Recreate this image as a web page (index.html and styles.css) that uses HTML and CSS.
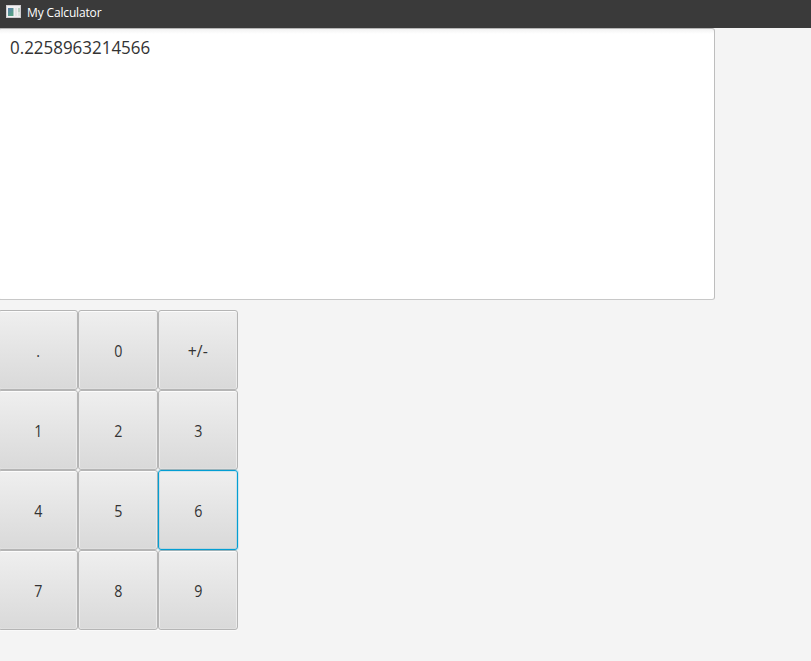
FILE: index.html
```html
<!DOCTYPE html>
<html lang="en">
<head>
<meta charset="utf-8">
<title>My Calculator</title>
<link rel="stylesheet" href="styles.css">
</head>
<body>
<header class="titlebar">
  <svg class="app-icon" width="15" height="13" viewBox="0 0 15 13">
    <defs><linearGradient id="screen" x1="0" y1="0" x2="0.6" y2="1"><stop offset="0" stop-color="#5b7fae"/><stop offset="1" stop-color="#55a184"/></linearGradient></defs>
    <rect width="15" height="13" fill="#d0ced1"/>
    <rect x="1" y="1" width="13" height="11" fill="#f0f0f1"/>
    <rect x="2" y="3" width="5" height="8" fill="url(#screen)"/>
    <rect x="7" y="3" width="1" height="8" fill="#a9c6c0"/>
    <rect x="9" y="3" width="2" height="8" fill="#e2e3e4"/>
    <rect x="12" y="3" width="2" height="4" fill="#b9d1c2"/>
    <rect x="12" y="7" width="2" height="4" fill="#dbe4de"/>
  </svg>
  <span class="title">My Calculator</span>
</header>
<main>
  <div class="display"><span class="value">0.2258963214566</span></div>
  <div class="keypad">
    <button><span>.</span></button><button><span>0</span></button><button class="sign"><span>+/-</span></button>
    <button><span>1</span></button><button><span>2</span></button><button><span>3</span></button>
    <button><span>4</span></button><button><span>5</span></button><button class="focused"><span>6</span></button>
    <button><span>7</span></button><button><span>8</span></button><button><span>9</span></button>
  </div>
</main>
</body>
</html>
```
FILE: styles.css
```css
* { box-sizing: border-box; }

body {
  margin: 0;
  height: 661px;
  overflow: hidden;
  background: #f4f4f4;
  color: #333;
  font-family: "Open Sans", "Noto Sans", sans-serif;
}

.titlebar {
  display: flex;
  align-items: flex-start;
  height: 28px;
  padding: 6px 0 0 6px;
  background: #3a3a3a;
  color: #fff;
}

.app-icon { margin-top: -1px; }

.title {
  margin: -2px 0 0 6px;
  font-size: 12px;
  line-height: 18px;
  letter-spacing: -0.15px;
}

.display {
  width: 717px;
  height: 272px;
  margin-left: -2px;
  padding: 6px 11px;
  border: 1px solid #c8c8c8;
  border-top-color: #b5b5b5;
  border-right-color: #bdbdbd;
  border-radius: 3px;
  background: linear-gradient(#f2f2f2, #fff 5px);
  font-size: 18px;
  line-height: 24px;
}

.value {
  display: inline-block;
  transform: scaleX(.942);
  transform-origin: left;
}

.keypad {
  display: grid;
  grid-template-columns: repeat(3, 80px);
  grid-auto-rows: 80px;
  margin: 10px 0 0 -2px;
}

button {
  padding: 1px 0 0;
  border: 1px solid #b5b5b5;
  border-radius: 3px;
  background: linear-gradient(#efefef, #d9d9d9);
  box-shadow: inset 0 1px #fcfcfc, inset 1px 0 #ebebeb, inset -1px 0 #ebebeb, inset 0 -1px #dfdfdf;
  color: #333;
  font: 15.5px/20px "Open Sans", "Noto Sans", sans-serif;
}

button span {
  display: inline-block;
  transform: scaleX(.92);
}

.sign span { transform: scaleX(1.02); }

.keypad button:nth-last-child(-n+3) {
  box-shadow: inset 0 1px #fcfcfc, inset 1px 0 #ebebeb, inset -1px 0 #ebebeb, inset 0 -1px #dfdfdf, 0 1px #f9f9f9;
}

.focused {
  border-color: #039ed3;
  box-shadow: inset 0 0 0 1px rgba(3, 158, 211, .13), 0 0 0 1px rgba(3, 158, 211, .15);
  z-index: 1;
}
```
